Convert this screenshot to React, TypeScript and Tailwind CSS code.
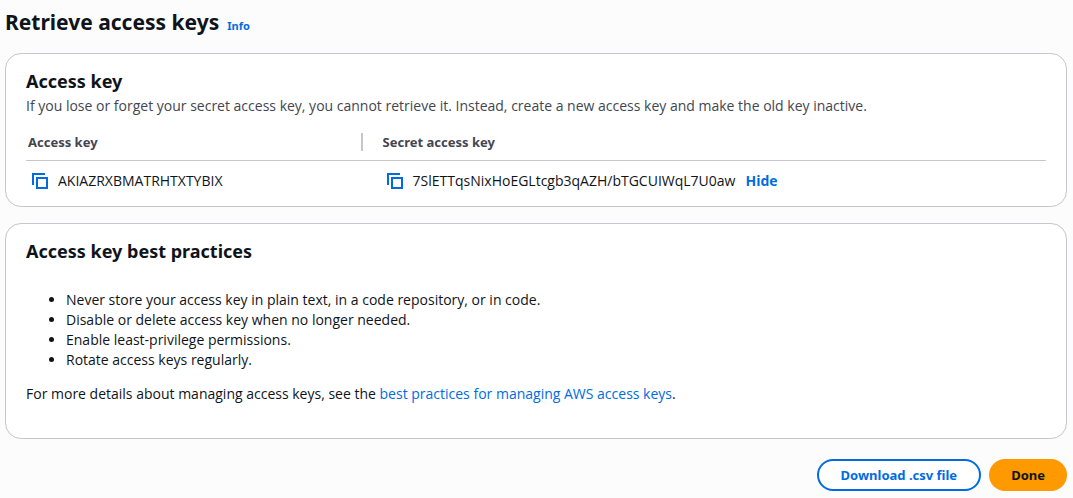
import type { ReactNode } from "react";

function CopyButton({ label }: { label: string }) {
  return (
    <button type="button" aria-label={label} className="size-4 shrink-0 text-[#006ce0]">
      <svg viewBox="0 0 16 16" className="size-4" fill="none" stroke="currentColor" strokeWidth="2" aria-hidden="true">
        <path d="M1 12V1h12" />
        <path d="M5 5h10v10H5z" />
      </svg>
    </button>
  );
}

function Panel({ title, children }: { title: string; children: ReactNode }) {
  return (
    <section className="rounded-2xl border border-[#c6c6cd] bg-white px-5">
      <h2 className="pt-[15px] font-['Noto_Sans',sans-serif] text-lg leading-6 font-bold">{title}</h2>
      {children}
    </section>
  );
}

const practices = [
  "Never store your access key in plain text, in a code repository, or in code.",
  "Disable or delete access key when no longer needed.",
  "Enable least-privilege permissions.",
  "Rotate access keys regularly.",
];

export default function App() {
  return (
    <main className="min-h-screen bg-[#fcfcfd] pt-2 pr-1.5 pl-[5px] font-['Open_Sans','Noto_Sans',sans-serif] text-sm leading-5 text-[#0f141a]">
      <header className="flex items-baseline gap-2 font-['Noto_Sans',sans-serif] font-bold">
        <h1 className="text-[21px] leading-7">Retrieve access keys</h1>
        <a href="#info" className="text-[11px] text-[#006ce0]">Info</a>
      </header>
      <div className="mt-[17px] flex flex-col gap-4">
        <Panel title="Access key">
          <p className="mt-[3px] text-[#424650]">
            If you lose or forget your secret access key, you cannot retrieve it. Instead, create a new access key and make the old key inactive.
          </p>
          <table className="mt-4 mb-[15px] w-full text-left">
            <thead>
              <tr className="border-b border-[#c6c6cd] font-['Noto_Sans',sans-serif] text-[13px] leading-5 text-[#424650]">
                <th className="w-[33%] pb-2 pl-0.5 font-bold">
                  <div className="flex justify-between">
                    Access key
                    <span className="my-px w-0.5 bg-[#c6c6cd]" />
                  </div>
                </th>
                <th className="pb-2 pl-5 font-bold">Secret access key</th>
              </tr>
            </thead>
            <tbody>
              <tr>
                <td className="pt-2.5">
                  <div className="flex items-center gap-2.5 pl-1.5">
                    <CopyButton label="Copy access key" />
                    AKIAZRXBMATRHTXTYBIX
                  </div>
                </td>
                <td className="pt-2.5">
                  <div className="flex items-center gap-2.5 pl-6">
                    <CopyButton label="Copy secret access key" />
                    7SlETTqsNixHoEGLtcgb3qAZH/bTGCUIWqL7U0aw
                    <button type="button" className="font-bold text-[#006ce0]">Hide</button>
                  </div>
                </td>
              </tr>
            </tbody>
          </table>
        </Panel>
        <Panel title="Access key best practices">
          <ul className="mt-[27px] list-disc pl-10">
            {practices.map((p) => (
              <li key={p}>{p}</li>
            ))}
          </ul>
          <p className="mt-3.5 mb-[34px]">
            For more details about managing access keys, see the{" "}
            <a href="#best-practices" className="text-[#006ce0]">best practices for managing AWS access keys</a>.
          </p>
        </Panel>
      </div>
      <footer className="mt-5 flex justify-end gap-2 font-['Noto_Sans',sans-serif] text-[13px] font-bold">
        <button type="button" className="h-8 rounded-full border-2 border-[#006ce0] bg-white px-[22px] text-[#006ce0]">Download .csv file</button>
        <button type="button" className="h-8 rounded-full bg-[#ff9900] px-[22px]">Done</button>
      </footer>
    </main>
  );
}
